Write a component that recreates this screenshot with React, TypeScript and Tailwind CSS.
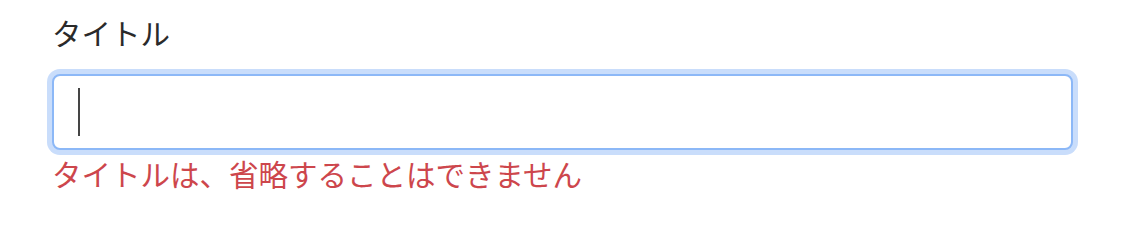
export default function App() {
  return (
    <div className="min-h-[230px] w-full bg-white pl-[52px] pr-[57px] pt-[10px] font-['Noto_Sans_CJK_JP','Noto_Sans',sans-serif]">
      <label className="block text-[29.5px] leading-[45px] text-[#2a2a2a]">タイトル</label>
      <div className="mt-[19px] flex h-[76px] items-center rounded-[8px] border-2 border-[#8cb8f7] bg-white pl-[24px] shadow-[0_0_0_5px_#c9ddfb]">
        <span className="h-[48px] w-[2px] bg-[#454545]" />
      </div>
      <p className="mt-[1px] text-[29.5px] leading-[45px] text-[#cd464c]">タイトルは、省略することはできません</p>
    </div>
  );
}
